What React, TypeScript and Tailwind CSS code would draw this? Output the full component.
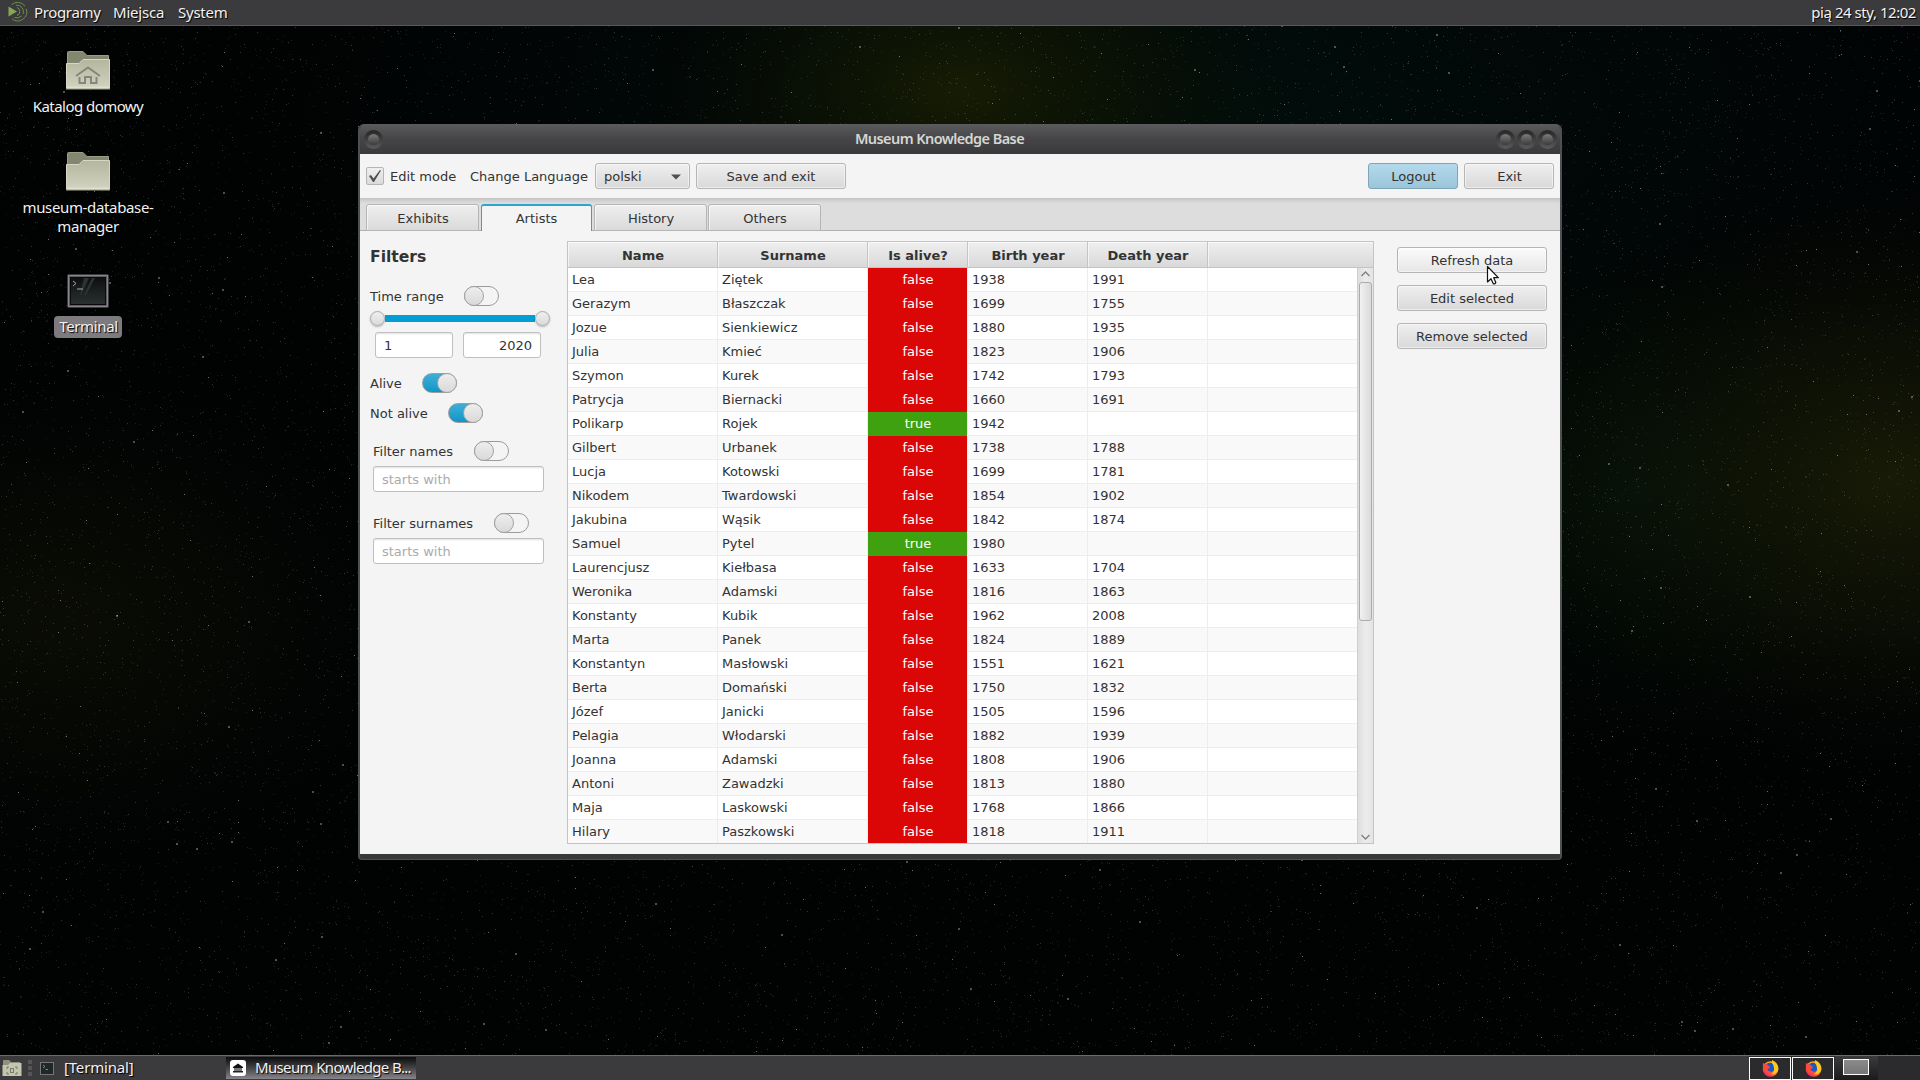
import React from "react";

const people: [string, string, boolean, string, string][] = [
  ["Lea", "Ziętek", false, "1938", "1991"],
  ["Gerazym", "Błaszczak", false, "1699", "1755"],
  ["Jozue", "Sienkiewicz", false, "1880", "1935"],
  ["Julia", "Kmieć", false, "1823", "1906"],
  ["Szymon", "Kurek", false, "1742", "1793"],
  ["Patrycja", "Biernacki", false, "1660", "1691"],
  ["Polikarp", "Rojek", true, "1942", ""],
  ["Gilbert", "Urbanek", false, "1738", "1788"],
  ["Lucja", "Kotowski", false, "1699", "1781"],
  ["Nikodem", "Twardowski", false, "1854", "1902"],
  ["Jakubina", "Wąsik", false, "1842", "1874"],
  ["Samuel", "Pytel", true, "1980", ""],
  ["Laurencjusz", "Kiełbasa", false, "1633", "1704"],
  ["Weronika", "Adamski", false, "1816", "1863"],
  ["Konstanty", "Kubik", false, "1962", "2008"],
  ["Marta", "Panek", false, "1824", "1889"],
  ["Konstantyn", "Masłowski", false, "1551", "1621"],
  ["Berta", "Domański", false, "1750", "1832"],
  ["Józef", "Janicki", false, "1505", "1596"],
  ["Pelagia", "Włodarski", false, "1882", "1939"],
  ["Joanna", "Adamski", false, "1808", "1906"],
  ["Antoni", "Zawadzki", false, "1813", "1880"],
  ["Maja", "Laskowski", false, "1768", "1866"],
  ["Hilary", "Paszkowski", false, "1818", "1911"],
];

function makeStars(count: number, seed: number, size: number) {
  let s = seed;
  const next = () => {
    s = (s * 1664525 + 1013904223) % 4294967296;
    return s / 4294967296;
  };
  let d = "";
  for (let i = 0; i < count; i++) {
    d += `M${Math.floor(next() * 1920)} ${Math.floor(next() * 1080)}h${size}v${size}h-${size}z`;
  }
  return d;
}

const faintStars = makeStars(16000, 7, 1);
const midStars = makeStars(5500, 99, 1);
const brightStars = makeStars(500, 4242, 1);
const bigStars = makeStars(150, 777, 2);

function Wallpaper() {
  return (
    <svg className="absolute inset-0" width="1920" height="1080" shapeRendering="crispEdges">
      <defs>
        <radialGradient id="glowTop">
          <stop offset="0" stopColor="#171c04" />
          <stop offset="0.5" stopColor="#0c1203" stopOpacity="0.7" />
          <stop offset="1" stopColor="#040702" stopOpacity="0" />
        </radialGradient>
        <radialGradient id="glowRight">
          <stop offset="0" stopColor="#181b06" />
          <stop offset="0.5" stopColor="#0e1205" stopOpacity="0.7" />
          <stop offset="1" stopColor="#040702" stopOpacity="0" />
        </radialGradient>
        <radialGradient id="glowTeal">
          <stop offset="0" stopColor="#02100c" />
          <stop offset="1" stopColor="#01080a" stopOpacity="0" />
        </radialGradient>
        <radialGradient id="glowGreen">
          <stop offset="0" stopColor="#06160b" />
          <stop offset="1" stopColor="#020a04" stopOpacity="0" />
        </radialGradient>
      </defs>
      <rect width="1920" height="1080" fill="#010303" />
      <ellipse cx="1150" cy="120" rx="900" ry="420" fill="url(#glowTeal)" />
      <ellipse cx="960" cy="90" rx="330" ry="200" fill="url(#glowTop)" />
      <ellipse cx="1640" cy="490" rx="260" ry="260" fill="url(#glowGreen)" />
      <ellipse cx="1890" cy="480" rx="400" ry="300" fill="url(#glowRight)" />
      <ellipse cx="60" cy="620" rx="380" ry="260" fill="url(#glowRight)" opacity="0.4" />
      <path d={faintStars} fill="#fff" opacity="0.11" />
      <path d={midStars} fill="#fff" opacity="0.2" />
      <path d={brightStars} fill="#fff" opacity="0.42" />
      <path d={bigStars} fill="#fff" opacity="0.3" />
    </svg>
  );
}

function Folder({ home }: { home?: boolean }) {
  return (
    <svg width="46" height="42" viewBox="0 0 46 42">
      <defs>
        <linearGradient id="folder" x2="0" y2="1">
          <stop offset="0" stopColor="#b4b69e" />
          <stop offset="0.9" stopColor="#cfd0bd" />
          <stop offset="1" stopColor="#e6e7d4" />
        </linearGradient>
      </defs>
      <path d="M2.500 14V3.500Q2.500 2.500 3.500 2.500H18L22 6.500H43.500V16H2.500Z" fill="#84876f" stroke="#9b9d88" />
      <path d="M1.500 14.500H14L18 10.500H44.500V39.500H1.500Z" fill="url(#folder)" stroke="#d6d7c5" />
      <path d="M1 40H45" stroke="#a5a78d" />
      {home && (
        <g fill="none" stroke="#85877a" strokeWidth="2">
          <path d="M11 27L23 18.500L35 27" />
          <path d="M14.500 28V34H20V28H26V34H31.500V28" />
        </g>
      )}
    </svg>
  );
}

function TerminalIcon() {
  return (
    <svg width="42" height="34" viewBox="0 0 42 34">
      <defs>
        <linearGradient id="screen" x2="0" y2="1">
          <stop offset="0" stopColor="#0c0f10" />
          <stop offset="1" stopColor="#2a3131" />
        </linearGradient>
      </defs>
      <rect x="0.500" y="0.500" width="41" height="33" rx="1" fill="#5e5e62" stroke="#3a3a3d" />
      <rect x="1.500" y="1.500" width="39" height="31" fill="none" stroke="#85858a" />
      <rect x="3.500" y="3.500" width="35" height="27" fill="url(#screen)" stroke="#0a0a0a" />
      <path d="M17 4H22L14 21H13ZM25 4H28L19 21H17Z" fill="#2c3333" />
      <path d="M6 7L9 9.500L6 12M10 15H16" fill="none" stroke="#a6acac" />
    </svg>
  );
}

function DesktopIcon({ children, label, selected }: { children: React.ReactNode; label: string[]; selected?: boolean }) {
  return (
    <div className="flex w-[176px] flex-col items-center">
      {children}
      <div
        className={
          selected
            ? "mt-2 flex h-[22px] items-center rounded bg-[#7d7b80] pr-[4px] pb-[2px] pl-[5px] text-center leading-[19px] tracking-[-0.3px]"
            : "mt-[6px] mb-px text-center leading-[19px]"
        }
      >
        {label.map((l) => (
          <div key={l} className={l.includes(" ") ? "tracking-[-0.55px]" : "tracking-[-0.35px]"}>
            {l}
          </div>
        ))}
      </div>
    </div>
  );
}

function FxButton({ children, className = "" }: { children: React.ReactNode; className?: string }) {
  return (
    <button
      className={`flex h-[26px] items-center justify-center rounded-[3px] border border-[#b5b5b5] bg-linear-to-b from-[#efefef] to-[#d9d9d9] pt-[2px] shadow-[inset_0_0_0_1px_rgba(255,255,255,0.5)] ${className}`}
    >
      {children}
    </button>
  );
}

function Toggle({ on, className = "" }: { on?: boolean; className?: string }) {
  return (
    <div
      className={`flex h-5 w-[35px] rounded-full border border-[#9c9c9c] ${
        on ? "justify-end bg-linear-to-b from-[#3daed6] to-[#0b96c8]" : "bg-[#f4f4f4]"
      } ${className}`}
    >
      <div className="-m-px size-5 rounded-full border border-[#a2a2a2] bg-linear-to-b from-[#eeeeee] to-[#d9d9d9]" />
    </div>
  );
}

function Field({ children, className = "" }: { children: React.ReactNode; className?: string }) {
  return (
    <div
      className={`flex h-[26px] items-center rounded-[3px] border border-[#bfbfbf] bg-white px-2 pt-[2px] shadow-[inset_0_2px_2px_-1px_rgba(0,0,0,0.12)] ${className}`}
    >
      {children}
    </div>
  );
}

function WindowDot() {
  return (
    <div className="flex size-[19px] items-center justify-center rounded-full bg-linear-to-b from-[#262626] to-[#5b5b5d]">
      <div className="size-[11px] rounded-full bg-linear-to-b from-[#7c7c7c] to-[#3c3c3c]" />
    </div>
  );
}

function SliderThumb() {
  return (
    <div className="size-[15px] rounded-full border border-[#a9a9a9] bg-linear-to-b from-[#efefef] to-[#dadada] shadow-[0_1px_2px_rgba(0,0,0,0.25)]" />
  );
}

function HeadCell({ children, className = "" }: { children?: React.ReactNode; className?: string }) {
  return (
    <div
      className={`flex items-center justify-center border-r border-b border-[#c4c4c4] bg-linear-to-b from-[#efefef] to-[#d9d9d9] pt-[3px] pl-px font-bold shadow-[inset_1px_1px_0_rgba(255,255,255,0.6)] ${className}`}
    >
      {children}
    </div>
  );
}

function Table() {
  return (
    <div className="flex h-[603px] w-[807px] flex-col overflow-hidden border border-[#c4c4c4] bg-white">
      <div className="flex h-[26px] shrink-0">
        <HeadCell className="w-[150px]">Name</HeadCell>
        <HeadCell className="w-[150px]">Surname</HeadCell>
        <HeadCell className="w-[100px]">Is alive?</HeadCell>
        <HeadCell className="w-[120px]">Birth year</HeadCell>
        <HeadCell className="w-[120px]">Death year</HeadCell>
        <HeadCell className="flex-1 border-r-0" />
      </div>
      <div className="flex h-[575px]">
        <div className="w-[789px] overflow-hidden">
          {people.map(([name, surname, alive, birth, death], i) => (
            <div key={i} className={`flex h-6 leading-[23px] ${i % 2 ? "bg-[#f9f9f9]" : "bg-white"}`}>
              <div className="w-[150px] border-r border-b border-[#ededed] pl-1">{name}</div>
              <div className="w-[150px] border-r border-b border-[#ededed] pl-1">{surname}</div>
              <div className="w-[100px] border-r border-[#ededed]">
                <div className={`h-6 pl-px text-center text-white ${alive ? "bg-[#3fa10f]" : "bg-[#db0606]"}`}>
                  {alive ? "true" : "false"}
                </div>
              </div>
              <div className="w-[120px] border-r border-b border-[#ededed] pl-1">{birth}</div>
              <div className="w-[120px] border-r border-b border-[#ededed] pl-1">{death}</div>
              <div className="flex-1 border-b border-[#ededed]" />
            </div>
          ))}
        </div>
        <div className="flex w-4 flex-col items-center border-l border-[#cfcfcf] bg-linear-to-r from-[#dedede] via-[#ececec] to-[#e4e4e4]">
          <svg className="mt-[3px] shrink-0" width="9" height="6" viewBox="0 0 9 6">
            <path d="M0.500 5L4.500 1L8.500 5" fill="none" stroke="#808080" strokeWidth="1.300" />
          </svg>
          <div className="mt-[5px] h-[339px] w-[13px] rounded-[3px] border border-[#ababab] bg-linear-to-r from-[#f1f1f1] to-[#dadada]" />
          <svg className="mt-auto mb-[3px] shrink-0" width="9" height="6" viewBox="0 0 9 6">
            <path d="M0.500 1L4.500 5L8.500 1" fill="none" stroke="#808080" strokeWidth="1.300" />
          </svg>
        </div>
      </div>
    </div>
  );
}

function Tab({ children, active, className = "" }: { children: React.ReactNode; active?: boolean; className?: string }) {
  return (
    <div
      className={`flex items-center justify-center rounded-t-[3px] border ${
        active
          ? "h-[27px] border-t-2 border-b-0 border-[#2ba6d1] bg-[#f4f4f4]"
          : "h-[27px] border-[#b5b5b5] bg-linear-to-b from-[#efefef] to-[#dadada] pt-[2px] shadow-[inset_1px_1px_0_rgba(255,255,255,0.6)]"
      } ${className}`}
    >
      {children}
    </div>
  );
}

function Filters() {
  return (
    <div className="flex w-[207px] flex-col pl-[10px]">
      <div className="mt-[14px] mb-px h-6 text-[15.600px] leading-6 font-bold">Filters</div>
      <div className="mt-4 flex h-5 items-center">
        <span className="w-[94px] pt-px">Time range</span>
        <Toggle />
      </div>
      <div className="mt-[5px] flex h-[15px] w-[180px] items-center">
        <SliderThumb />
        <div className="h-[7px] flex-1 bg-[#039ed3]" />
        <SliderThumb />
      </div>
      <div className="mt-[6px] ml-[5px] flex gap-[10px]">
        <Field className="w-[78px]">1</Field>
        <Field className="w-[78px] justify-end">2020</Field>
      </div>
      <div className="mt-[15px] flex h-5 items-center">
        <span className="w-[52px] pt-px">Alive</span>
        <Toggle on />
      </div>
      <div className="mt-[10px] flex h-5 items-center">
        <span className="w-[78px] pt-px">Not alive</span>
        <Toggle on />
      </div>
      <div className="mt-[18px] ml-[3px] flex h-5 items-center">
        <span className="w-[101px] pt-px">Filter names</span>
        <Toggle />
      </div>
      <Field className="mt-[5px] ml-[3px] w-[171px] text-[#ababab]">starts with</Field>
      <div className="mt-[21px] ml-[3px] flex h-5 items-center">
        <span className="w-[121px] pt-px">Filter surnames</span>
        <Toggle />
      </div>
      <Field className="mt-[5px] ml-[3px] w-[171px] text-[#ababab]">starts with</Field>
    </div>
  );
}

function Cursor() {
  return (
    <svg className="absolute top-[18px] left-[89px]" width="14" height="21" viewBox="0 0 14 21">
      <path
        d="M1.500 1.500V17L5 13.700L7.300 18.700Q8.800 19.300 9.800 17.600L7.700 12.700H12.300Z"
        fill="#fff"
        stroke="#111"
        strokeWidth="1.200"
        strokeLinejoin="round"
      />
    </svg>
  );
}

function AppWindow() {
  return (
    <div className="absolute top-[124px] left-[358px] flex h-[736px] w-[1204px] flex-col overflow-hidden rounded-t-[6px] rounded-b-[4px] border-x-2 border-b border-[#4e4f51] bg-[#38393b] font-['DejaVu_Sans',sans-serif] text-[13px] text-[#333]">
      <div className="flex h-[30px] shrink-0 items-center bg-linear-to-b from-[#5b5b5d] via-[#454547] to-[#3a3a3c] pr-[3px] pl-[4px]">
        <WindowDot />
        <div className="flex-1 text-center font-['Noto_Sans',sans-serif] text-[14.500px] font-semibold tracking-[-0.580px] text-[#d6d6d2]">
          Museum Knowledge Base
        </div>
        <div className="flex gap-[2px]">
          <WindowDot />
          <WindowDot />
          <WindowDot />
        </div>
      </div>
      <div className="flex h-11 shrink-0 items-center bg-[#f4f4f4] px-[6px]">
        <div className="flex size-[18px] items-center justify-center rounded-[2px] border border-[#b5b5b5] bg-linear-to-b from-[#efefef] to-[#dadada]">
          <svg width="14" height="14" viewBox="0 0 14 14">
            <path d="M1 7L3 6L5.500 9.500L12 1L13 1.500L6 13H5Z" fill="#4f4f4f" />
          </svg>
        </div>
        <span className="ml-[6px] w-[80px] pt-px whitespace-nowrap">Edit mode</span>
        <span className="w-[125px] pt-px whitespace-nowrap">Change Language</span>
        <FxButton className="w-[95px] !justify-between pr-2 pl-2">
          <span>polski</span>
          <svg width="10" height="6" viewBox="0 0 10 6">
            <path d="M0 0.500H10L5 5.500Z" fill="#4f4f4f" />
          </svg>
        </FxButton>
        <FxButton className="ml-[6px] w-[150px]">Save and exit</FxButton>
        <button className="ml-auto flex h-[26px] w-[90px] items-center justify-center rounded-[3px] border border-[#7fa6b8] bg-linear-to-b from-[#b3daec] to-[#9bc5d9] pt-[2px] pl-px">
          Logout
        </button>
        <FxButton className="ml-[6px] w-[90px] pl-px">Exit</FxButton>
      </div>
      <div className="flex h-[33px] shrink-0 items-end border-b border-[#b0b0b0] bg-[#dddddd] pl-[6px] shadow-[inset_0_5px_4px_-3px_rgba(0,0,0,0.14)]">
        <Tab className="-mb-px w-[113px] pl-px">Exhibits</Tab>
        <Tab active className="-mb-px ml-[2px] w-[111px]">Artists</Tab>
        <Tab className="-mb-px ml-[2px] w-[113px] pl-px">History</Tab>
        <Tab className="-mb-px ml-[1px] w-[113px] pl-px">Others</Tab>
      </div>
      <div className="flex h-[623px] shrink-0 bg-[#f4f4f4]">
        <Filters />
        <div className="pt-[10px]">
          <Table />
        </div>
        <div className="relative mt-4 ml-[23px] flex flex-col gap-3">
          <FxButton className="w-[150px] from-[#fbfbfb] to-[#e6e6e6]">Refresh data</FxButton>
          <FxButton className="w-[150px]">Edit selected</FxButton>
          <FxButton className="w-[150px]">Remove selected</FxButton>
          <Cursor />
        </div>
      </div>
    </div>
  );
}

function Firefox() {
  return (
    <svg width="17" height="17" viewBox="0 0 17 17">
      <defs>
        <linearGradient id="fox" x1="1" y1="0" x2="0.200" y2="1">
          <stop offset="0" stopColor="#ffe226" />
          <stop offset="0.500" stopColor="#ff8a16" />
          <stop offset="1" stopColor="#f5156c" />
        </linearGradient>
      </defs>
      <circle cx="8.500" cy="9" r="7.800" fill="url(#fox)" />
      <circle cx="8" cy="7.500" r="4.800" fill="#1b57c9" />
      <path d="M10 0Q17 3 16.300 10Q14 15 9 14Q13 12 12 8Q11.500 4 10 3Z" fill="#ffc81e" />
      <path d="M1 3Q3 4 5 4.500L8 7Q8 8.500 5.500 9Q6 11.500 9.500 11.500Q7 14 4 12Q0 9 1 3Z" fill="#fb4b38" />
    </svg>
  );
}

function TopPanel() {
  return (
    <div className="relative flex h-[26px] items-center border-b border-[#59585a] bg-[#3b3a3c] pl-2 [text-shadow:1px_1px_1px_#000]">
      <svg className="-mt-px" width="20" height="20" viewBox="0 0 20 20" fill="none" stroke="#6c9045">
        <path d="M0.500 4.500L9 9.500L0.500 14.500Z" fill="#87a556" stroke="none" />
        <path d="M9 5.500A4.300 4.300 0 0 1 9 13.600" />
        <path d="M8 3.300A6.500 6.500 0 0 1 15 12M13.500 14A6.600 6.600 0 0 1 6.500 15.500" />
        <path d="M3.500 2.800A9 9 0 0 1 17 4.200M18.200 6.800A9 9 0 0 1 4 16.800" />
      </svg>
      <span className="ml-[6px] w-[79px] tracking-[-0.350px]">Programy</span>
      <span className="w-[65px] tracking-[-0.200px]">Miejsca</span>
      <span className="tracking-[-0.250px]">System</span>
      <span className="mr-[4px] ml-auto tracking-[-0.450px]">pią 24 sty, 12:02</span>
    </div>
  );
}

function BottomPanel() {
  return (
    <div className="relative flex h-[25px] items-center border-t border-[#6b6a6c] bg-[#3b3a3c] pl-[2px] [text-shadow:1px_1px_1px_#000]">
      <svg width="20" height="18" viewBox="0 0 20 18">
        <path d="M1 16V2Q1 1 2 1H7L9 3H18V16Z" fill="#8f917c" />
        <path d="M0.500 17V6H6L8 4H19.500V17Z" fill="#c3c5ae" />
        <path d="M5 10V8H7M13 8H15V10M15 13V15H13M7 15H5V13" fill="none" stroke="#77796a" />
        <rect x="8.500" y="9.500" width="3" height="4" fill="none" stroke="#77796a" />
      </svg>
      <div className="ml-[6px] flex w-1 flex-col gap-[2px]">
        <div className="size-1 bg-[#555456]" />
        <div className="size-1 bg-[#555456]" />
        <div className="size-1 bg-[#555456]" />
      </div>
      <svg className="ml-2" width="14" height="13" viewBox="0 0 14 13">
        <rect x="0.500" y="0.500" width="13" height="12" fill="#1f2727" stroke="#737779" />
        <path d="M3 3L5 4.500L3 6M5.500 7.500H8" fill="none" stroke="#7b8585" />
      </svg>
      <span className="ml-[10px] w-[162px] pb-[2px] tracking-[-0.180px]">[Terminal]</span>
      <div className="flex h-[22px] w-[190px] items-center bg-linear-to-b from-[#0c0c0d] to-[#87868a] pl-1">
        <div className="flex size-4 shrink-0 items-center justify-center rounded-[3px] bg-white">
          <svg width="10" height="10" viewBox="0 0 10 10">
            <path d="M5 0.500L10 4V5H0V4Z" fill="#111" />
            <path d="M1 5H9V8H1Z" fill="#777" />
            <path d="M0 8H10V9.500H0Z" fill="#222" />
          </svg>
        </div>
        <span className="ml-[9px] pb-[2px] tracking-[-0.650px] whitespace-nowrap">Museum Knowledge B...</span>
      </div>
      <div className="ml-auto flex h-6 bg-[#2b2a2c]">
        <div className="mt-px flex h-[23px] w-[42px] items-center justify-center border border-white">
          <Firefox />
        </div>
        <div className="mt-px ml-px flex h-[23px] w-[42px] items-center justify-center border border-white">
          <Firefox />
        </div>
        <div className="ml-px flex w-[43px] justify-center bg-linear-to-b from-[#3b3a3c] to-[#1b1b1c] pt-[3px]">
          <div className="mr-px h-4 w-[26px] border border-white bg-linear-to-b from-[#8b8b8b] to-[#757575]" />
        </div>
        <div className="w-[42px]" />
      </div>
    </div>
  );
}

export default function App() {
  return (
    <div className="relative flex h-[1080px] w-[1920px] flex-col overflow-hidden bg-black font-['Noto_Sans',sans-serif] text-[15px] text-[#f2f1f0]">
      <Wallpaper />
      <TopPanel />
      <div className="relative flex-1 [text-shadow:1px_1px_1px_#000]">
        <div className="flex flex-col items-start pt-[23px]">
          <DesktopIcon label={["Katalog domowy"]}>
            <Folder home />
          </DesktopIcon>
          <div className="h-[33px]" />
          <DesktopIcon label={["museum-database-", "manager"]}>
            <Folder />
          </DesktopIcon>
          <div className="h-[37px]" />
          <DesktopIcon label={["Terminal"]} selected>
            <TerminalIcon />
          </DesktopIcon>
        </div>
      </div>
      <BottomPanel />
      <AppWindow />
    </div>
  );
}
